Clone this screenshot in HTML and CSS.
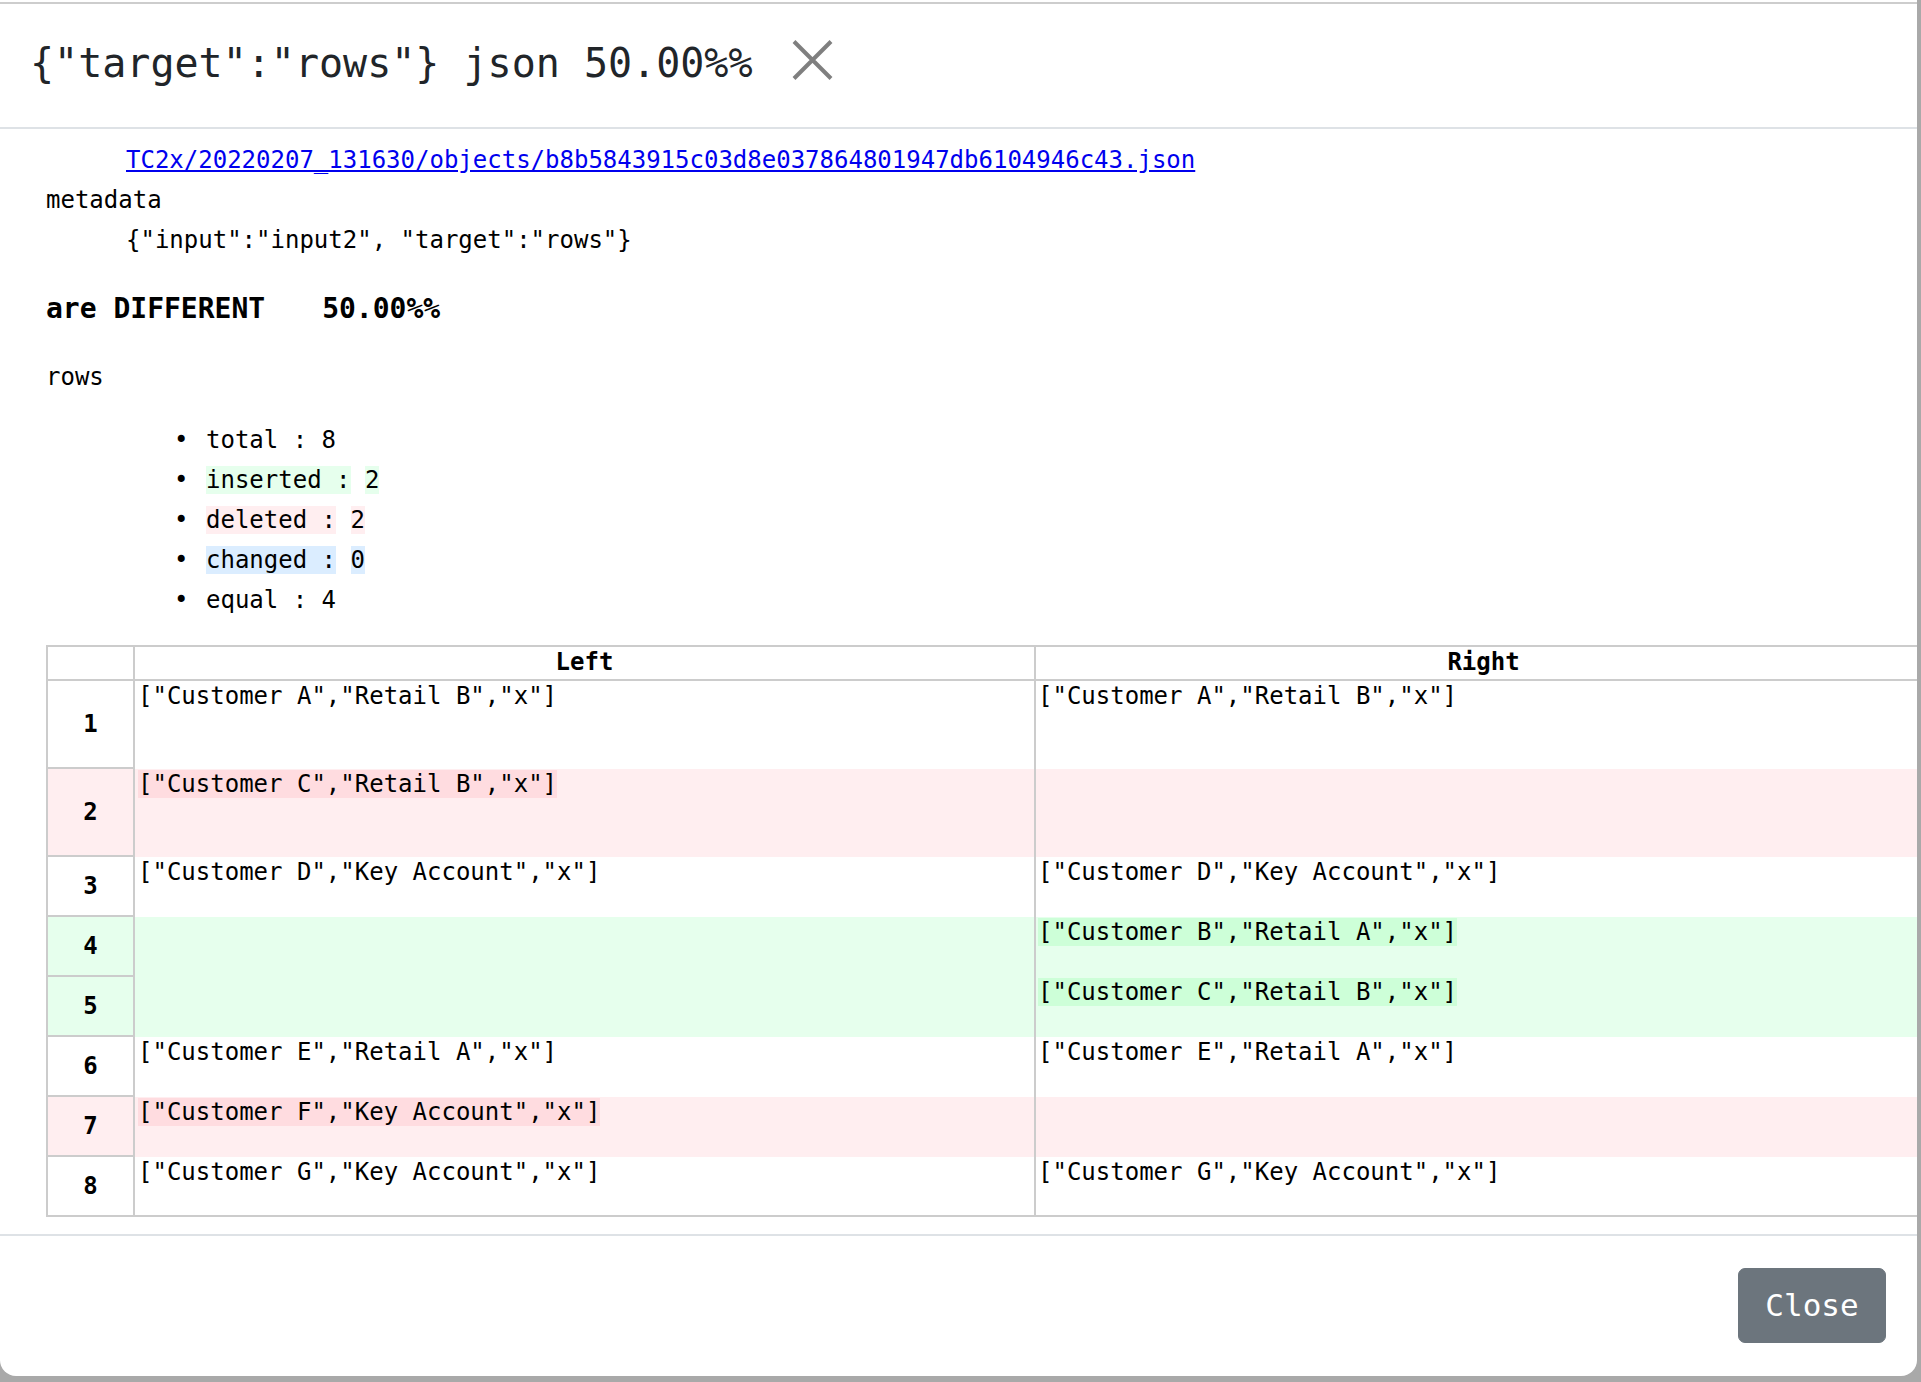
FILE: index.html
```html
<!DOCTYPE html>
<html lang="en">
<head>
<meta charset="utf-8">
<title>{"target":"rows"} json 50.00%%</title>
<link rel="stylesheet" href="styles.css">
</head>
<body>
<div class="modal">
  <div class="modal-header">
    <h5 class="modal-title">{"target":"rows"} json 50.00%%</h5>
    <button class="btn-x" type="button" aria-label="Close">
      <svg width="41" height="40" viewBox="0 0 41 40"><path d="M2 1.5 L39 38.5 M39 1.5 L2 38.5" stroke="#7f7f7f" stroke-width="4" fill="none"/></svg>
    </button>
  </div>
  <div class="modal-body">
    <div class="indent"><a href="#">TC2x/20220207_131630/objects/b8b5843915c03d8e037864801947db6104946c43.json</a></div>
    <div>metadata</div>
    <div class="indent">{"input":"input2", "target":"rows"}</div>
    <div class="verdict"><span>are DIFFERENT</span><span class="ratio">50.00%%</span></div>
    <div class="rows-label">rows</div>
    <ul class="stats">
      <li>total : 8</li>
      <li><span class="hl-ins">inserted :</span> <span class="hl-ins">2</span></li>
      <li><span class="hl-del">deleted :</span> <span class="hl-del">2</span></li>
      <li><span class="hl-chg">changed :</span> <span class="hl-chg">0</span></li>
      <li>equal : 4</li>
    </ul>
    <table class="diff">
      <colgroup>
        <col class="c-num">
        <col class="c-left">
        <col class="c-right">
      </colgroup>
      <thead>
        <tr>
          <th class="num"></th>
          <th class="lc">Left</th>
          <th class="rc">Right</th>
        </tr>
      </thead>
      <tbody>
        <tr class="tall">
          <td class="num">1</td>
          <td class="lc">["Customer A","Retail B","x"]</td>
          <td class="rc">["Customer A","Retail B","x"]</td>
        </tr>
        <tr class="tall del">
          <td class="num">2</td>
          <td class="lc"><span class="w-del">["Customer C","Retail B","x"]</span></td>
          <td class="rc"></td>
        </tr>
        <tr class="std">
          <td class="num">3</td>
          <td class="lc">["Customer D","Key Account","x"]</td>
          <td class="rc">["Customer D","Key Account","x"]</td>
        </tr>
        <tr class="std ins">
          <td class="num">4</td>
          <td class="lc"></td>
          <td class="rc"><span class="w-ins">["Customer B","Retail A","x"]</span></td>
        </tr>
        <tr class="std ins">
          <td class="num">5</td>
          <td class="lc"></td>
          <td class="rc"><span class="w-ins">["Customer C","Retail B","x"]</span></td>
        </tr>
        <tr class="std">
          <td class="num">6</td>
          <td class="lc">["Customer E","Retail A","x"]</td>
          <td class="rc">["Customer E","Retail A","x"]</td>
        </tr>
        <tr class="std del">
          <td class="num">7</td>
          <td class="lc"><span class="w-del">["Customer F","Key Account","x"]</span></td>
          <td class="rc"></td>
        </tr>
        <tr class="last">
          <td class="num">8</td>
          <td class="lc">["Customer G","Key Account","x"]</td>
          <td class="rc">["Customer G","Key Account","x"]</td>
        </tr>
      </tbody>
    </table>
  </div>
  <div class="modal-footer">
    <button class="btn-close" type="button">Close</button>
  </div>
</div>
</body>
</html>
```

FILE: styles.css
```css
* {
  box-sizing: border-box;
}

html,
body {
  margin: 0;
  padding: 0;
}

body {
  width: 1921px;
  height: 1382px;
  overflow: hidden;
  background: #a9a9a9;
  font-family: "DejaVu Sans Mono", monospace;
  color: #000;
}

.modal {
  width: 1917px;
  height: 1376px;
  background: #fff;
  border-radius: 0 0 16px 16px;
  padding-top: 2px;
  display: flex;
  flex-direction: column;
  overflow: hidden;
}

.modal-header {
  border-top: 2px solid #cdcdcd;
  border-bottom: 2px solid #dee2e6;
  padding: 35px 0 40px 30px;
  display: flex;
  align-items: flex-start;
  flex: none;
}

.modal-title {
  margin: 0;
  font-size: 40px;
  line-height: 48px;
  font-weight: 400;
  color: #212529;
  white-space: pre;
}

.btn-x {
  margin: 1px 0 0 40px;
  padding: 0;
  border: 0;
  background: none;
  width: 41px;
  height: 40px;
}

.btn-x svg {
  display: block;
}

.modal-body {
  flex: 1;
  padding: 11px 0 0 46px;
  font-size: 24px;
  line-height: 40px;
  overflow: hidden;
}

.indent {
  padding-left: 80px;
}

.modal-body a {
  color: #0000ee;
  text-decoration: underline;
}

.verdict {
  margin-top: 29px;
  font-size: 28px;
  font-weight: 700;
  line-height: 40px;
}

.ratio {
  margin-left: 57px;
}

.rows-label {
  margin-top: 28px;
}

.stats {
  margin: 23px 0 0;
  padding-left: 160px;
  list-style: none;
}

.stats li {
  height: 40px;
}

.stats li::before {
  content: "\2022";
  display: inline-block;
  width: 32px;
  margin-left: -32px;
  font-size: 24px;
}

.hl-ins {
  background: #e6ffed;
}

.hl-del {
  background: #ffeef0;
}

.hl-chg {
  background: #dbedff;
}

.diff {
  margin-top: 25px;
  border-collapse: separate;
  border-spacing: 0;
  table-layout: fixed;
  width: 1887px;
  border: 2px solid #ccc;
  font-size: 24px;
  line-height: 28px;
}

.c-num {
  width: 87px;
}

.c-left {
  width: 901px;
}

.c-right {
  width: 895px;
}

.diff th {
  font-weight: 700;
  text-align: center;
  padding: 1px 2px 3px;
  border-bottom: 2px solid #ccc;
}

.diff .num {
  border-right: 2px solid #ccc;
  text-align: center;
  vertical-align: middle;
  font-weight: 700;
}

.diff tbody .num {
  border-bottom: 2px solid #ccc;
}

.diff tbody tr.last .num {
  border-bottom: 0;
}

.diff .lc {
  border-right: 2px solid #ccc;
}

.diff td.lc,
.diff td.rc {
  vertical-align: top;
  padding: 1px 3px;
  white-space: pre;
}

.diff td.rc {
  padding-left: 2px;
}

.diff tr.tall {
  height: 88px;
}

.diff tr.std {
  height: 60px;
}

.diff tr.last {
  height: 58px;
}

.diff tr.del td {
  background: #ffeef0;
}

.diff tr.ins td {
  background: #e6ffed;
}

.w-del {
  background: #ffdce0;
}

.w-ins {
  background: #cdffd8;
}

.modal-footer {
  flex: none;
  border-top: 2px solid #dee2e6;
  padding: 32px 31px 33px;
  display: flex;
  justify-content: flex-end;
}

.btn-close {
  width: 148px;
  height: 75px;
  padding: 0;
  background: #6c757d;
  border: 1px solid #6c757d;
  border-radius: 7px;
  color: #fff;
  font-family: "DejaVu Sans Mono", monospace;
  font-size: 31px;
  line-height: 73px;
}
```
